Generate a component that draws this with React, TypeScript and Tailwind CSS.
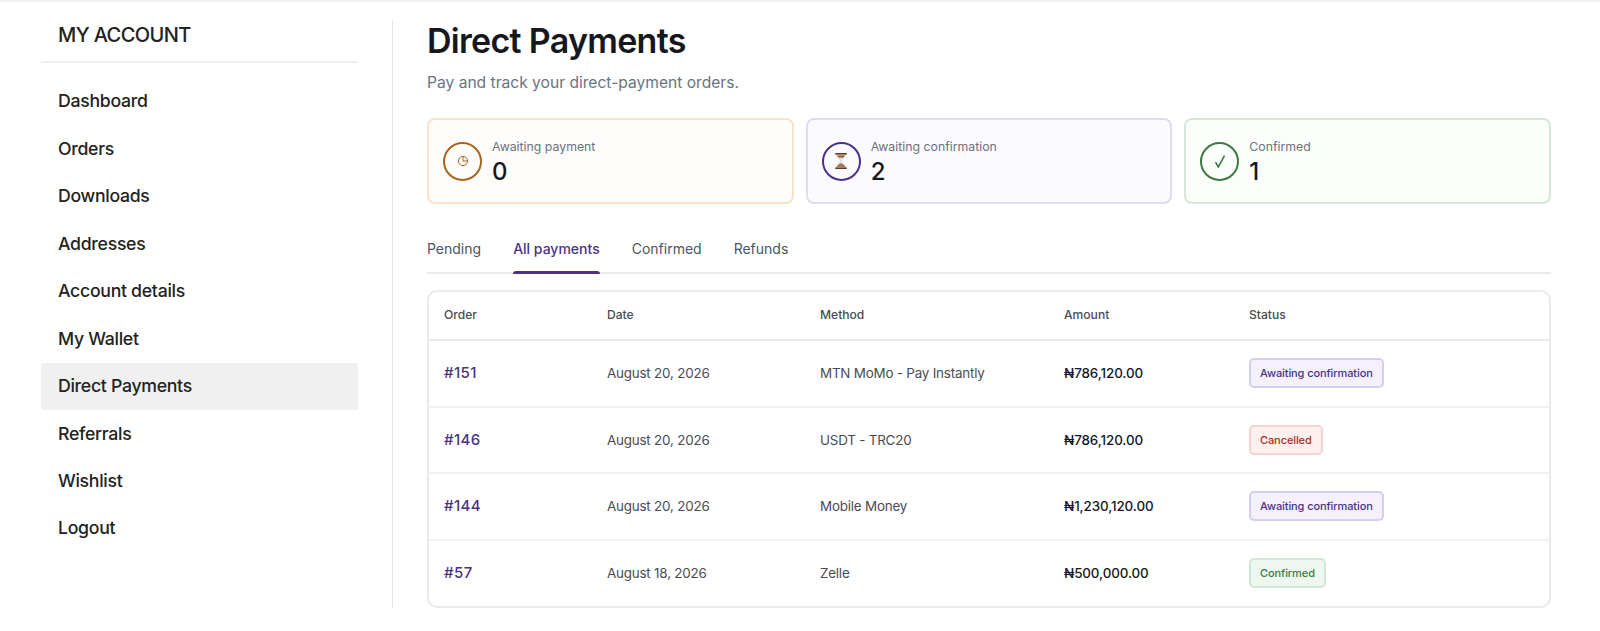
const nav = ["Dashboard", "Orders", "Downloads", "Addresses", "Account details", "My Wallet", "Direct Payments", "Referrals", "Wishlist", "Logout"];

function Hourglass() {
  return (
    <svg width="16" height="18" viewBox="0 0 18 20">
      <rect x="2.500" y="1" width="13" height="2" rx="0.6" fill="#5d3a24" />
      <rect x="2.500" y="17" width="13" height="2" rx="0.6" fill="#5d3a24" />
      <path d="M4 3h10c0 3.500-3 5.200-3.900 7 .9 1.800 3.900 3.500 3.900 7H4c0-3.500 3-5.200 3.900-7C7 8.200 4 6.500 4 3z" fill="#e5e3e6" />
      <path d="M4.600 3.500h8.800c-.4 1.200-1.100 2-2 2.800H6.600c-.9-.8-1.600-1.600-2-2.800z" fill="#9c6a45" />
      <path d="M4.200 17c.3-2 1.900-3.700 4.800-4.600 2.900.9 4.500 2.600 4.800 4.600z" fill="#a8764f" />
    </svg>
  );
}

const cards = [
  { label: "Awaiting payment", value: "0", box: "border-[#f5e4c8] bg-[#fffdfb]", ring: "border-[#a8651e]",
    icon: (
      <svg width="12" height="12" viewBox="0 0 12 12" fill="none" stroke="#a8651e" strokeWidth="1">
        <circle cx="6" cy="6" r="4.600" />
        <path d="M6 1.400V6h4.600" />
      </svg>
    ) },
  { label: "Awaiting confirmation", value: "2", box: "border-[#e0dbf0] bg-[#fbfaff]", ring: "border-[#4b3285]", icon: <Hourglass /> },
  { label: "Confirmed", value: "1", box: "border-[#d5e7d7] bg-[#fcfefc]", ring: "border-[#3c7a45]",
    icon: (
      <svg width="14" height="15" viewBox="0 0 14 15" fill="none" stroke="#3c7a45" strokeWidth="1.600">
        <path d="M2.500 8.200 5.300 12.800 11.500 1.600" />
      </svg>
    ) },
];

const statusStyle: Record<string, string> = {
  "Awaiting confirmation": "border-[#d6cef0] bg-[#f4f1fc] text-[#4b3285]",
  Cancelled: "border-[#f4d3ce] bg-[#fdf0ee] text-[#a3302a]",
  Confirmed: "border-[#d0e7d3] bg-[#edf7ef] text-[#3c7a45]",
};

const rows = [
  ["#151", "August 20, 2026", "MTN MoMo - Pay Instantly", "₦786,120.00", "Awaiting confirmation"],
  ["#146", "August 20, 2026", "USDT - TRC20", "₦786,120.00", "Cancelled"],
  ["#144", "August 20, 2026", "Mobile Money", "₦1,230,120.00", "Awaiting confirmation"],
  ["#57", "August 18, 2026", "Zelle", "₦500,000.00", "Confirmed"],
];

export default function App() {
  return (
    <div className="h-[631px] overflow-hidden bg-white font-['Inter',sans-serif] text-[#222222]">
      <div className="h-[2px] bg-[#f1f1f1]" />
      <div className="flex pl-[41px] pr-[49px] pt-[18px]">
        <aside className="w-[317px] shrink-0">
          <h2 className="h-[43px] border-b-2 border-[#eeeeee] px-[17px] pt-[1px] text-[20px] leading-[28px] font-medium tracking-[-0.6px]">MY ACCOUNT</h2>
          <ul className="mt-[15px]">
            {nav.map((n) => (
              <li key={n} className={`flex h-[47.450px] items-center rounded-[3px] px-[17px] text-[17.700px] font-medium tracking-[-0.3px] ${n === "Direct Payments" ? "bg-[#f0f0f0]" : ""}`}>{n}</li>
            ))}
          </ul>
        </aside>
        <div className="ml-[34px] h-[588px] w-px shrink-0 bg-[#e5e5e5]" />
        <main className="ml-[34px] min-w-0 flex-1">
          <h1 className="text-[34px] leading-[42px] font-semibold tracking-[-0.7px] text-[#16181d]">Direct Payments</h1>
          <p className="mt-[9px] text-[15.600px] leading-[24px] text-[#6b7280]">Pay and track your direct-payment orders.</p>
          <div className="mt-[23px] grid grid-cols-3 gap-[12px]">
            {cards.map((c) => (
              <div key={c.label} className={`flex h-[86px] items-center gap-[10px] rounded-[8px] border-2 px-[14px] ${c.box}`}>
                <div className={`flex h-[39px] w-[39px] shrink-0 items-center justify-center rounded-full border-[2px] ${c.ring}`}>{c.icon}</div>
                <div className="pt-[3px]">
                  <div className="text-[12.300px] leading-[18px] text-[#6b7280]">{c.label}</div>
                  <div className="mt-[1px] text-[24px] leading-[30px] font-medium text-[#16181d]">{c.value}</div>
                </div>
              </div>
            ))}
          </div>
          <div className="mt-[15px] flex h-[55px] gap-[32px] border-b-2 border-[#e9e9ee] text-[14px] text-[#4b5563]">
            {["Pending", "All payments", "Confirmed", "Refunds"].map((t) => (
              <div key={t} className={`relative flex items-center pt-[5px] ${t === "All payments" ? "font-medium text-[#4b3285]" : ""}`}>
                {t}
                {t === "All payments" && <span className="absolute right-0 bottom-[-2px] left-0 h-[3px] rounded-t-[3px] bg-[#4b3285]" />}
              </div>
            ))}
          </div>
          <div className="mt-[16px] overflow-hidden rounded-[10px] border-2 border-[#e9e9ee]">
            <table className="w-full table-fixed border-collapse">
              <colgroup>
                <col className="w-[163px]" />
                <col className="w-[213px]" />
                <col className="w-[244px]" />
                <col className="w-[185px]" />
                <col />
              </colgroup>
              <thead>
                <tr className="h-[48px] border-b-2 border-[#e9e9ee] text-left text-[12.100px] font-medium text-[#4b4b55]">
                  {["Order", "Date", "Method", "Amount", "Status"].map((h) => (
                    <th key={h} className="pl-[15px] font-medium">{h}</th>
                  ))}
                </tr>
              </thead>
              <tbody>
                {rows.map((r, i) => (
                  <tr key={r[0]} className={`h-[66.500px] text-[13.400px] tracking-[-0.2px] text-[#4b4b55] ${i < 3 ? "border-b-2 border-[#f0f0f3]" : ""}`}>
                    <td className="pl-[15px] text-[15px] font-medium tracking-[0.4px] text-[#4b3285]">{r[0]}</td>
                    <td className="pl-[15px]">{r[1]}</td>
                    <td className="pl-[15px]">{r[2]}</td>
                    <td className="pl-[15px] font-medium tracking-[-0.1px] text-[#16181d]">{r[3]}</td>
                    <td className="pl-[15px]">
                      <span className={`inline-flex h-[30px] items-center rounded-[5px] border-2 px-[9px] text-[11px] font-medium tracking-[-0.1px] ${statusStyle[r[4]]}`}>{r[4]}</span>
                    </td>
                  </tr>
                ))}
              </tbody>
            </table>
          </div>
        </main>
      </div>
    </div>
  );
}
